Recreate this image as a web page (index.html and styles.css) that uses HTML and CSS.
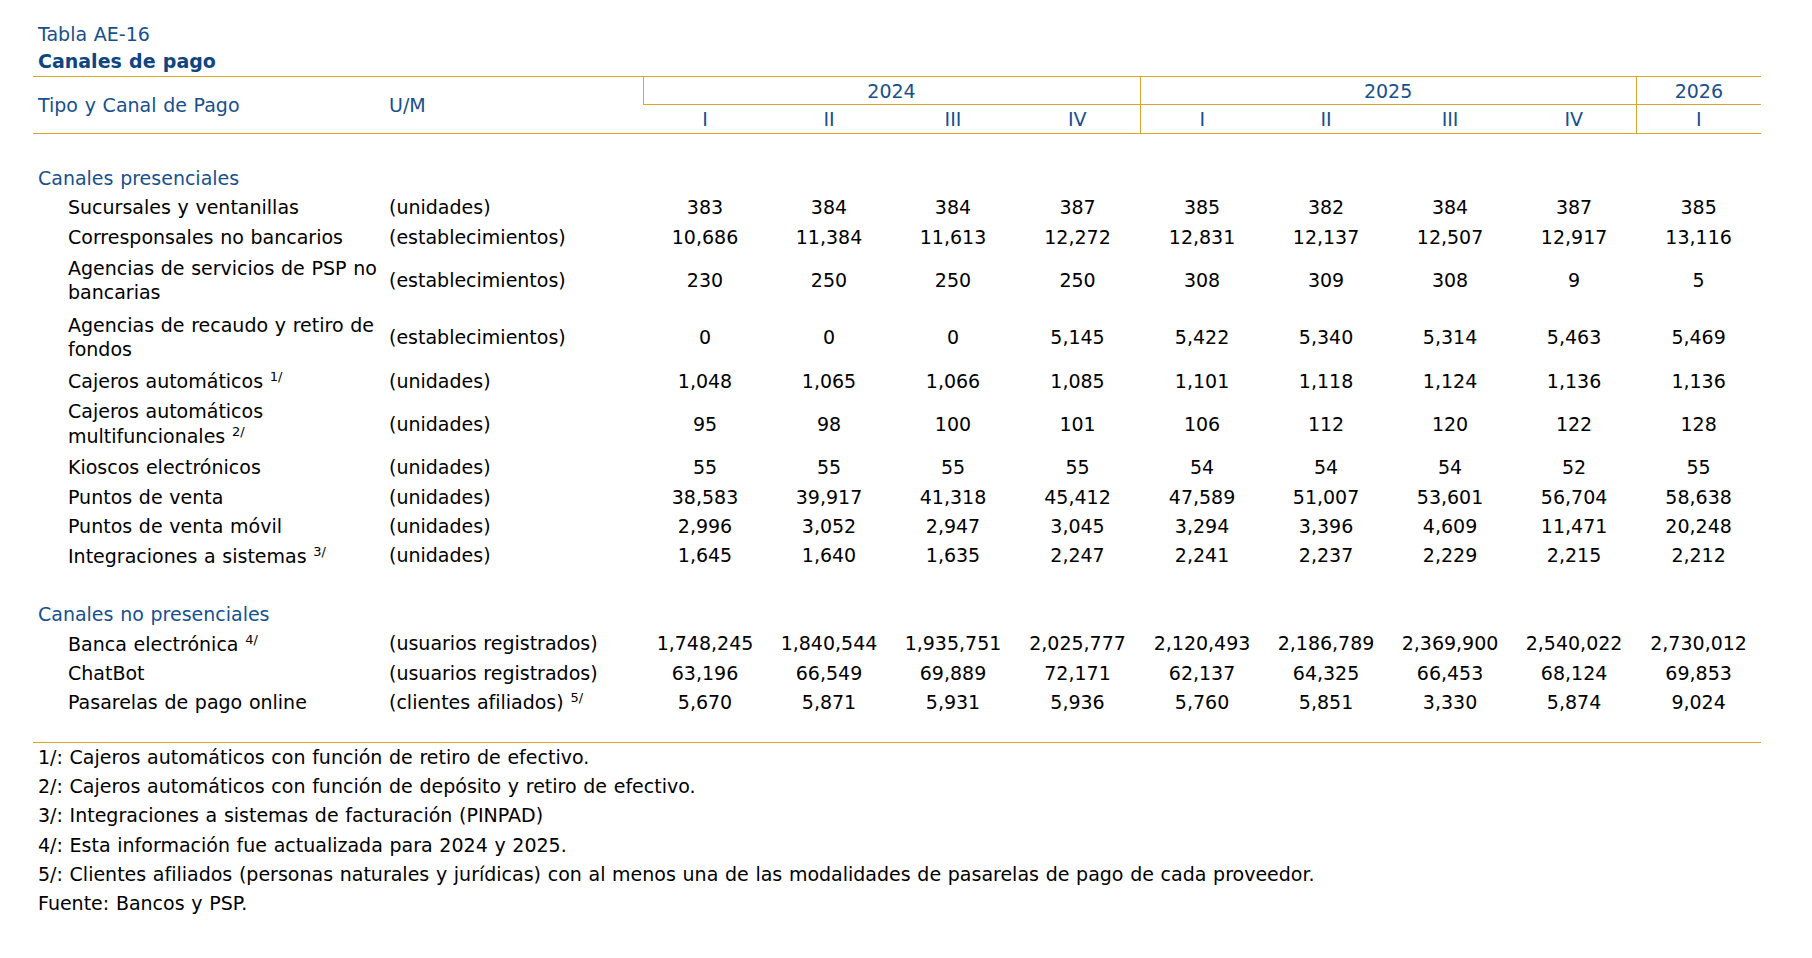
FILE: index.html
```html
<!DOCTYPE html>
<html lang="es">
<head>
<meta charset="utf-8">
<title>Tabla AE-16 Canales de pago</title>
<link rel="stylesheet" href="styles.css">
</head>
<body>
<div class="page">
  <div class="title">
    <div class="t-num">Tabla AE-16</div>
    <div class="t-name">Canales de pago</div>
  </div>
  <table class="data">
    <colgroup>
      <col class="c-lbl"><col class="c-um">
      <col class="c-q"><col class="c-q"><col class="c-q"><col class="c-q5">
      <col class="c-q"><col class="c-q"><col class="c-q"><col class="c-q">
      <col class="c-q5">
    </colgroup>
    <thead>
      <tr class="h1">
        <th rowspan="2" class="lbl">Tipo y Canal de Pago</th>
        <th rowspan="2" class="um">U/M</th>
        <th colspan="4" class="yr gs">2024</th>
        <th colspan="4" class="yr gs">2025</th>
        <th class="yr gs">2026</th>
      </tr>
      <tr class="h2">
        <th>I</th><th>II</th><th>III</th><th>IV</th>
        <th class="gs">I</th><th>II</th><th>III</th><th>IV</th>
        <th class="gs">I</th>
      </tr>
    </thead>
    <tbody>
      <tr class="s"><td colspan="11"></td></tr>
      <tr class="s"><td colspan="11" class="sec">Canales presenciales</td></tr>
      <tr class="s"><td class="item">Sucursales y ventanillas</td><td class="unit">(unidades)</td><td>383</td><td>384</td><td>384</td><td>387</td><td>385</td><td>382</td><td>384</td><td>387</td><td>385</td></tr>
      <tr class="s"><td class="item">Corresponsales no bancarios</td><td class="unit">(establecimientos)</td><td>10,686</td><td>11,384</td><td>11,613</td><td>12,272</td><td>12,831</td><td>12,137</td><td>12,507</td><td>12,917</td><td>13,116</td></tr>
      <tr class="d"><td class="item">Agencias de servicios de PSP no<br>bancarias</td><td class="unit">(establecimientos)</td><td>230</td><td>250</td><td>250</td><td>250</td><td>308</td><td>309</td><td>308</td><td>9</td><td>5</td></tr>
      <tr class="d"><td class="item">Agencias de recaudo y retiro de<br>fondos</td><td class="unit">(establecimientos)</td><td>0</td><td>0</td><td>0</td><td>5,145</td><td>5,422</td><td>5,340</td><td>5,314</td><td>5,463</td><td>5,469</td></tr>
      <tr class="s"><td class="item">Cajeros automáticos <sup>1/</sup></td><td class="unit">(unidades)</td><td>1,048</td><td>1,065</td><td>1,066</td><td>1,085</td><td>1,101</td><td>1,118</td><td>1,124</td><td>1,136</td><td>1,136</td></tr>
      <tr class="d m"><td class="item">Cajeros automáticos<br>multifuncionales <sup>2/</sup></td><td class="unit">(unidades)</td><td>95</td><td>98</td><td>100</td><td>101</td><td>106</td><td>112</td><td>120</td><td>122</td><td>128</td></tr>
      <tr class="s"><td class="item">Kioscos electrónicos</td><td class="unit">(unidades)</td><td>55</td><td>55</td><td>55</td><td>55</td><td>54</td><td>54</td><td>54</td><td>52</td><td>55</td></tr>
      <tr class="s"><td class="item">Puntos de venta</td><td class="unit">(unidades)</td><td>38,583</td><td>39,917</td><td>41,318</td><td>45,412</td><td>47,589</td><td>51,007</td><td>53,601</td><td>56,704</td><td>58,638</td></tr>
      <tr class="s"><td class="item">Puntos de venta móvil</td><td class="unit">(unidades)</td><td>2,996</td><td>3,052</td><td>2,947</td><td>3,045</td><td>3,294</td><td>3,396</td><td>4,609</td><td>11,471</td><td>20,248</td></tr>
      <tr class="s"><td class="item">Integraciones a sistemas <sup>3/</sup></td><td class="unit">(unidades)</td><td>1,645</td><td>1,640</td><td>1,635</td><td>2,247</td><td>2,241</td><td>2,237</td><td>2,229</td><td>2,215</td><td>2,212</td></tr>
      <tr class="s"><td colspan="11"></td></tr>
      <tr class="s"><td colspan="11" class="sec">Canales no presenciales</td></tr>
      <tr class="s"><td class="item">Banca electrónica <sup>4/</sup></td><td class="unit">(usuarios registrados)</td><td>1,748,245</td><td>1,840,544</td><td>1,935,751</td><td>2,025,777</td><td>2,120,493</td><td>2,186,789</td><td>2,369,900</td><td>2,540,022</td><td>2,730,012</td></tr>
      <tr class="s"><td class="item">ChatBot</td><td class="unit">(usuarios registrados)</td><td>63,196</td><td>66,549</td><td>69,889</td><td>72,171</td><td>62,137</td><td>64,325</td><td>66,453</td><td>68,124</td><td>69,853</td></tr>
      <tr class="s"><td class="item">Pasarelas de pago online</td><td class="unit">(clientes afiliados) <sup>5/</sup></td><td>5,670</td><td>5,871</td><td>5,931</td><td>5,936</td><td>5,760</td><td>5,851</td><td>3,330</td><td>5,874</td><td>9,024</td></tr>
      <tr class="e"><td colspan="11"></td></tr>
    </tbody>
  </table>
  <div class="notes">
    <p>1/: Cajeros automáticos con función de retiro de efectivo.</p>
    <p>2/: Cajeros automáticos con función de depósito y retiro de efectivo.</p>
    <p>3/: Integraciones a sistemas de facturación (PINPAD)</p>
    <p>4/: Esta información fue actualizada para 2024 y 2025.</p>
    <p>5/: Clientes afiliados (personas naturales y jurídicas) con al menos una de las modalidades de pasarelas de pago de cada proveedor.</p>
    <p>Fuente: Bancos y PSP.</p>
  </div>
</div>
</body>
</html>
```

FILE: styles.css
```css
html, body {
  margin: 0;
  padding: 0;
  background: #ffffff;
}

body {
  font-family: "DejaVu Sans", Verdana, sans-serif;
  font-size: 19px;
  line-height: 24px;
  word-spacing: 0.65px;
  color: #000000;
}

.page {
  padding: 21px 0 0 33px;
  width: 1728px;
}

.title {
  padding-left: 5px;
  color: #17508e;
  line-height: 27px;
}

.t-name {
  font-weight: bold;
  color: #0f4580;
}

.data {
  width: 1728px;
  table-layout: fixed;
  border-collapse: collapse;
  margin-top: 1px;
}

.c-lbl { width: 351px; }
.c-um { width: 259px; }
.c-q { width: 124px; }
.c-q5 { width: 125px; }

.data th {
  font-weight: normal;
  color: #17508e;
  padding: 0;
  text-align: center;
  vertical-align: middle;
  border-bottom: 1px solid #dca52a;
}

.data .h1 th {
  border-top: 1px solid #dca52a;
  height: 27px;
}

.data .h2 th {
  height: 28px;
}

.data th.lbl,
.data th.um {
  text-align: left;
  padding-left: 5px;
}

.data th.gs {
  border-left: 1px solid #dca52a;
}

.data td {
  padding: 0;
  text-align: center;
  vertical-align: middle;
  white-space: nowrap;
}

.data tr.s td { height: 29.33px; }
.data tr.d td { height: 57.33px; }
.data tr.e td { height: 25px; }

.data td.sec {
  text-align: left;
  padding-left: 5px;
  color: #17508e;
}

.data td.item {
  text-align: left;
  padding-left: 35px;
}

.data td.unit {
  text-align: left;
  padding-left: 5px;
}

sup {
  font-size: 13px;
  line-height: 17px;
  vertical-align: 7px;
}

.notes {
  border-top: 1px solid #dca52a;
  padding-left: 5px;
}

.notes p {
  margin: 0;
  line-height: 29.33px;
}
```
